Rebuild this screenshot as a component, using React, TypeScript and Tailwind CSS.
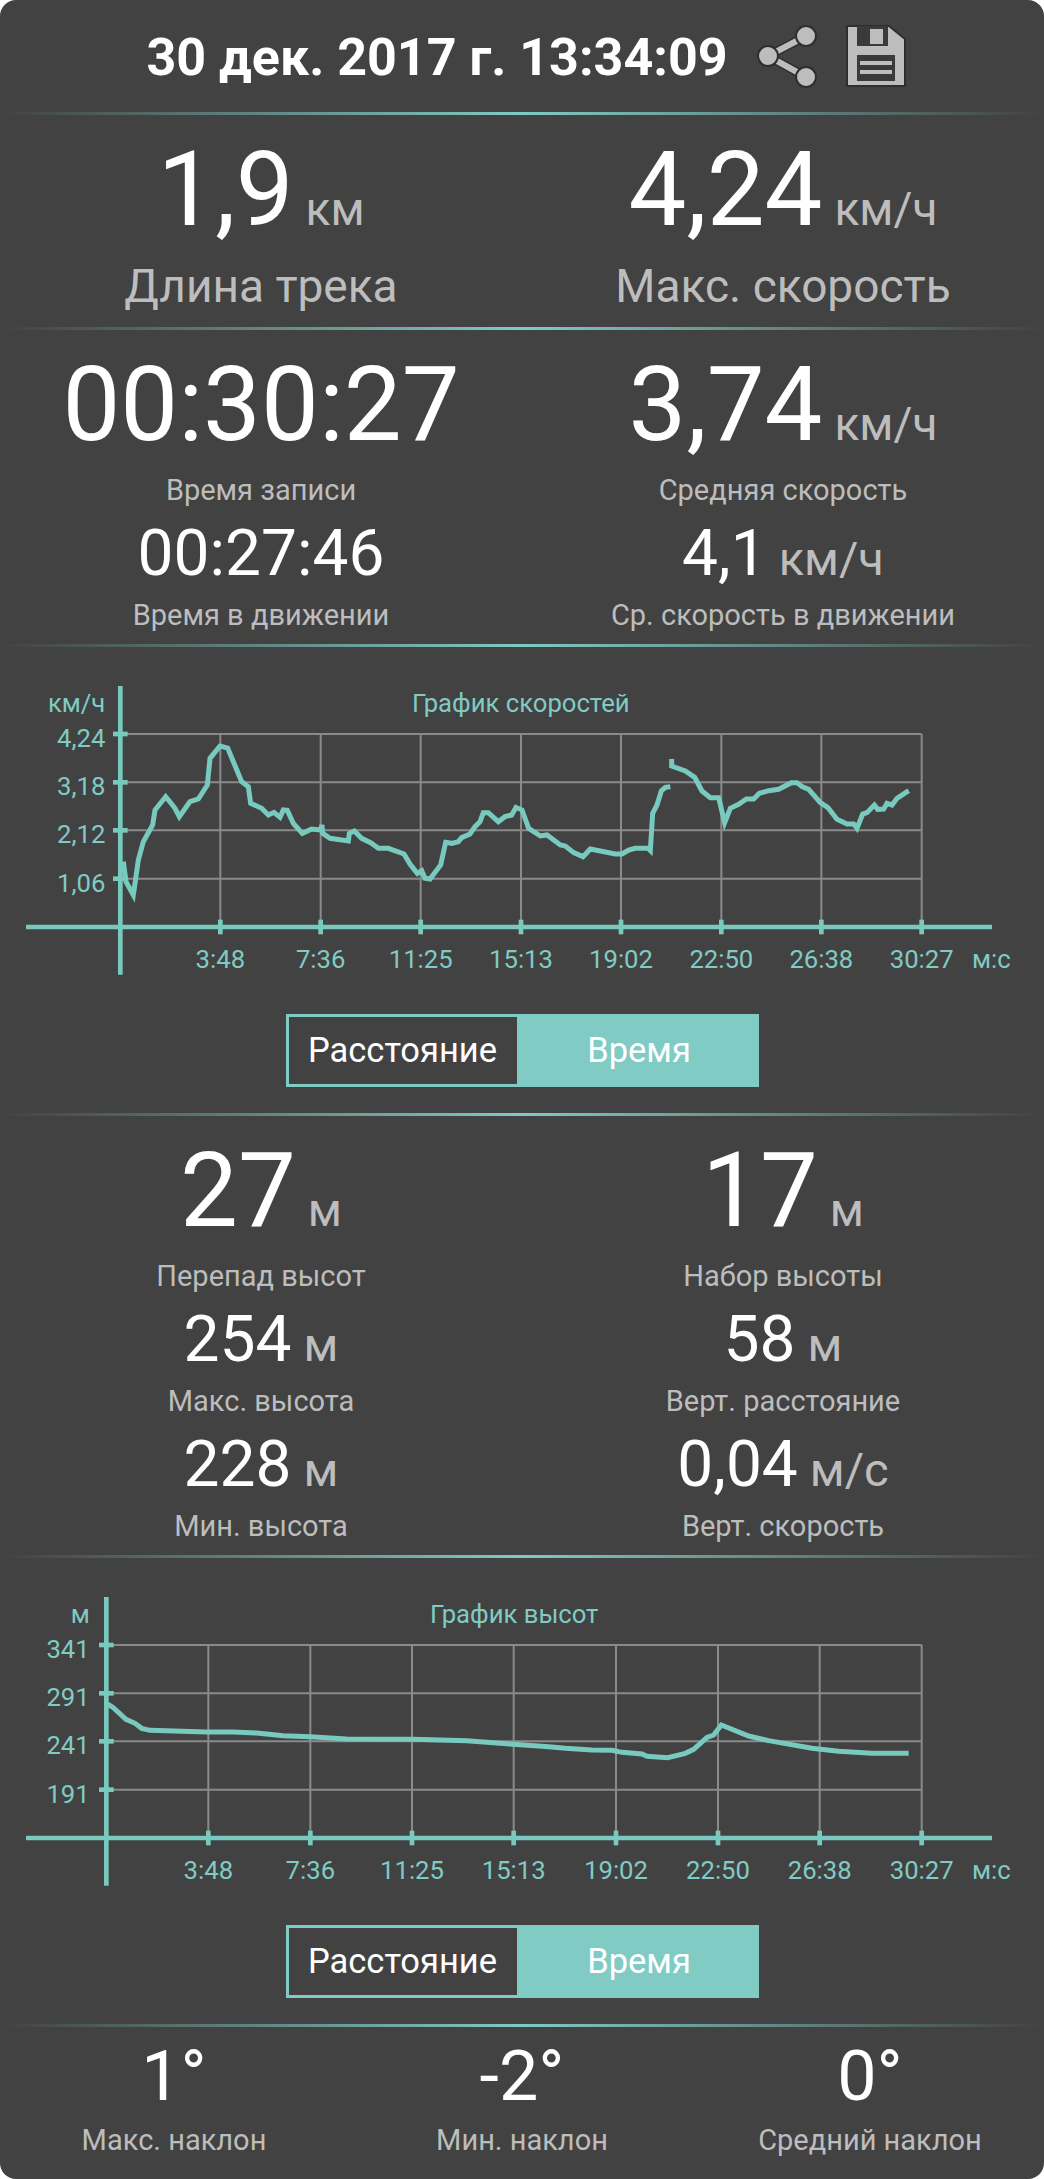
const ACCENT = '#78cabf';
const TEXT_ACCENT = '#80cbc4';

const speedLeft = [
  [370, 605], [378, 665], [400, 705], [415, 600], [430, 545], [458, 495], [465, 450], [497, 410], [515, 432], [525, 445],
  [538, 470], [570, 425], [595, 417], [622, 375], [630, 295], [660, 258], [683, 264], [725, 365], [745, 380], [752, 430],
  [785, 445], [805, 465], [822, 457], [840, 472], [850, 450], [862, 451], [880, 490], [907, 520], [935, 507], [962, 510],
  [966, 495], [968, 520], [990, 535], [1045, 543], [1048, 520], [1063, 513], [1085, 535], [1112, 548], [1135, 565], [1165, 565],
  [1212, 582], [1230, 612], [1252, 640], [1265, 632], [1275, 655], [1290, 657], [1322, 615], [1337, 547], [1355, 550], [1375, 545],
  [1385, 533], [1410, 522], [1425, 500], [1440, 485], [1450, 458], [1465, 458], [1495, 485], [1515, 470], [1535, 465], [1548, 442],
  [1566, 450],
];
const speedMid = [
  [20, 505], [55, 528], [75, 525], [115, 555], [130, 558], [155, 578], [183, 590], [205, 567], [280, 582], [300, 582],
  [320, 570], [340, 565], [378, 565], [385, 572], [392, 460], [405, 435], [418, 393], [430, 382], [445, 380],
];
const speedRight = [
  [449, 297], [449, 318], [490, 333], [518, 352], [540, 393], [565, 413], [590, 413], [608, 488], [625, 445], [650, 433],
  [673, 417], [695, 417], [712, 400], [740, 392], [770, 388], [808, 368], [825, 368], [840, 380], [860, 388], [895, 428],
  [918, 443], [945, 478], [975, 492], [995, 492], [1005, 505], [1022, 462], [1035, 458], [1057, 435], [1067, 448], [1085, 447],
  [1095, 430], [1110, 435], [1125, 415], [1160, 392],
];
const heightLeft = [
  [322, 372], [340, 383], [378, 418], [405, 430], [425, 445], [450, 451], [620, 456], [700, 456], [770, 459], [850, 467],
  [930, 470], [1040, 477], [1240, 478], [1400, 482], [1540, 493],
];
const heightRight = [
  [80, 500], [130, 505], [210, 510], [270, 511], [300, 517], [360, 522], [375, 529], [437, 533], [490, 520], [515, 508],
  [555, 472], [575, 465], [598, 435], [680, 468], [740, 482], [870, 505], [950, 514], [1050, 520], [1160, 520],
];

// right half of the crops starts at 1566 in chart units (3x)
const shift = (pts: number[][]) => pts.map(([x, y]) => [x + 1566, y]);
const toPath = (pts: number[][]) => pts.map(([x, y]) => `${x},${y}`).join(' ');

const X_LABELS = ['3:48', '7:36', '11:25', '15:13', '19:02', '22:50', '26:38', '30:27'];

type ChartProps = {
  title: string;
  unit: string;
  originX: number;
  labelGap: number;
  gridX: number[];
  gridY: number[];
  baseY: number;
  topY: number;
  bottomY: number;
  yLabels: string[];
  titleX: number;
  titleY: number;
  lines: number[][][];
};

function Chart({ title, unit, originX, labelGap, gridX, gridY, baseY, topY, bottomY, yLabels, titleX, titleY, lines }: ChartProps) {
  const right = 2765;
  return (
    <svg viewBox="0 0 3132 990" className="block w-[1044px] h-[330px]">
      {gridY.map((y) => (
        <line key={y} x1={originX} x2={right} y1={y} y2={y} stroke="#8a8a8a" strokeWidth={6} />
      ))}
      {gridX.map((x) => (
        <line key={x} x1={x} x2={x} y1={gridY[0]} y2={baseY} stroke="#8a8a8a" strokeWidth={6} />
      ))}
      <line x1={78} x2={2976} y1={baseY} y2={baseY} stroke={ACCENT} strokeWidth={14} />
      <line x1={originX} x2={originX} y1={topY} y2={bottomY} stroke={ACCENT} strokeWidth={14} />
      {gridY.map((y) => (
        <line key={y} x1={originX - 22} x2={originX + 22} y1={y} y2={y} stroke={ACCENT} strokeWidth={14} />
      ))}
      {gridX.map((x) => (
        <line key={x} x1={x} x2={x} y1={baseY - 22} y2={baseY + 22} stroke={ACCENT} strokeWidth={14} />
      ))}
      {lines.map((pts, i) => (
        <polyline key={i} points={toPath(pts)} fill="none" stroke={ACCENT} strokeWidth={15} strokeLinejoin="miter" />
      ))}
      <g fill={TEXT_ACCENT} fontSize={77} fontFamily="Roboto, sans-serif">
        <text x={originX - labelGap} y={titleY} textAnchor="end">{unit}</text>
        <text x={titleX} y={titleY}>{title}</text>
        {yLabels.map((label, i) => (
          <text key={label} x={originX - labelGap} y={gridY[i] + 39} textAnchor="end">{label}</text>
        ))}
        {X_LABELS.map((label, i) => (
          <text key={label} x={gridX[i]} y={baseY + 122} textAnchor="middle">{label}</text>
        ))}
        <text x={2916} y={baseY + 122}>м:с</text>
      </g>
    </svg>
  );
}

function Divider() {
  return <div className="h-[3px] bg-[linear-gradient(to_right,#42424200,#80cbc4_50%,#42424200)]" />;
}

function Big({ value, unit, size, unitSize }: { value: string; unit?: string; size: string; unitSize: string }) {
  return (
    <div className="text-center whitespace-nowrap leading-none">
      <span className={`text-white ${size}`}>{value}</span>
      {unit && <span className={`text-[#bdbdbd] ml-3 ${unitSize}`}>{unit}</span>}
    </div>
  );
}

function Toggle() {
  return (
    <div className="flex justify-center">
      <div className="flex w-[473px] h-[73px] text-[34.5px] text-white">
        <div className="w-[234px] border-[3px] border-[#80cbc4] flex items-center justify-center">Расстояние</div>
        <div className="flex-1 bg-[#80cbc4] flex items-center justify-center">Время</div>
      </div>
    </div>
  );
}

function Stat({ value, unit, label, size, unitSize, h }: { value: string; unit?: string; label: string; size: string; unitSize: string; h: string }) {
  return (
    <div className="flex flex-col items-center">
      <div className={`${h} flex items-center`}>
        <Big value={value} unit={unit} size={size} unitSize={unitSize} />
      </div>
      <div className="text-[29px] leading-[36px] text-[#bdbdbd] whitespace-nowrap">{label}</div>
    </div>
  );
}

function ShareIcon() {
  return (
    <svg width="60" height="63" viewBox="0 0 60 63">
      <path d="M11 31 L49 11 M11 31 L49 52" stroke="#2e2e2e" strokeWidth="9" fill="none" />
      <path d="M11 31 L49 11 M11 31 L49 52" stroke="#bdbdbd" strokeWidth="6" fill="none" />
      <g fill="#bdbdbd" stroke="#2e2e2e" strokeWidth="2">
        <circle cx="49" cy="11" r="10" />
        <circle cx="49" cy="52" r="10" />
        <circle cx="11" cy="31" r="10" />
      </g>
    </svg>
  );
}

function SaveIcon() {
  return (
    <svg width="60" height="62" viewBox="0 0 60 62">
      <path d="M1 1 H43 L59 14 V61 H1 Z" fill="#bdbdbd" stroke="#2e2e2e" strokeWidth="2" />
      <rect x="11" y="1" width="31" height="20" fill="#3a3a3a" />
      <rect x="24" y="4" width="13" height="15" fill="#bdbdbd" />
      <rect x="11" y="30" width="38" height="26" fill="#3a3a3a" />
      <rect x="14" y="36" width="32" height="4" fill="#bdbdbd" />
      <rect x="14" y="45" width="32" height="4" fill="#bdbdbd" />
    </svg>
  );
}

export default function App() {
  const hugeSize = 'text-[103px]';
  const hugeUnit = 'text-[46px]';
  const midSize = 'text-[64px]';
  const midUnit = 'text-[47px]';
  const midRow = 'h-[89px] pt-[3px]';
  return (
    <div className="w-[1044px] h-[2179px] overflow-hidden bg-[#424242] rounded-[16px] font-['Roboto',sans-serif]">
      <div className="h-[112px] pl-2 flex items-center justify-center gap-[29px]">
        <span className="pt-[3px] text-[52px] font-bold text-white whitespace-nowrap">30 дек. 2017 г. 13:34:09</span>
        <div className="flex items-center gap-[29px]">
          <ShareIcon />
          <SaveIcon />
        </div>
      </div>
      <Divider />
      <div className="grid grid-cols-2 h-[212px]">
        {[
          ['1,9', 'км', 'Длина трека'],
          ['4,24', 'км/ч', 'Макс. скорость'],
        ].map(([value, unit, label]) => (
          <div key={label} className="flex flex-col items-center pt-[5px]">
            <div className="h-[138px] flex items-center">
              <Big value={value} unit={unit} size={hugeSize} unitSize={hugeUnit} />
            </div>
            <div className="text-[46px] leading-[56px] text-[#bdbdbd] whitespace-nowrap">{label}</div>
          </div>
        ))}
      </div>
      <Divider />
      <div className="grid grid-cols-2 h-[314px] pt-[6px]">
        <div>
          <Stat value="00:30:27" label="Время записи" size={hugeSize} unitSize={hugeUnit} h="h-[136px]" />
          <Stat value="00:27:46" label="Время в движении" size={midSize} unitSize={midUnit} h={midRow} />
        </div>
        <div>
          <Stat value="3,74" unit="км/ч" label="Средняя скорость" size={hugeSize} unitSize={hugeUnit} h="h-[136px]" />
          <Stat value="4,1" unit="км/ч" label="Ср. скорость в движении" size={midSize} unitSize={midUnit} h={midRow} />
        </div>
      </div>
      <Divider />
      <div className="h-[354px] mt-[13px]">
        <Chart
          title="График скоростей"
          unit="км/ч"
          originX={361}
          labelGap={45}
          gridX={[661, 962, 1262, 1563, 1863, 2164, 2464, 2765]}
          gridY={[222, 367, 511, 656]}
          baseY={801}
          topY={78}
          bottomY={944}
          yLabels={['4,24', '3,18', '2,12', '1,06']}
          titleX={1236}
          titleY={157}
          lines={[[...speedLeft, ...shift(speedMid)], shift(speedRight)]}
        />
      </div>
      <Toggle />
      <div className="h-[26px]" />
      <Divider />
      <div className="grid grid-cols-2 h-[439px] pt-[7px]">
        <div>
          <Stat value="27" unit="м" label="Перепад высот" size={hugeSize} unitSize={hugeUnit} h="h-[135px]" />
          <Stat value="254" unit="м" label="Макс. высота" size={midSize} unitSize={midUnit} h={midRow} />
          <Stat value="228" unit="м" label="Мин. высота" size={midSize} unitSize={midUnit} h={midRow} />
        </div>
        <div>
          <Stat value="17" unit="м" label="Набор высоты" size={hugeSize} unitSize={hugeUnit} h="h-[135px]" />
          <Stat value="58" unit="м" label="Верт. расстояние" size={midSize} unitSize={midUnit} h={midRow} />
          <Stat value="0,04" unit="м/с" label="Верт. скорость" size={midSize} unitSize={midUnit} h={midRow} />
        </div>
      </div>
      <Divider />
      <div className="h-[345px] mt-[22px]">
        <Chart
          title="График высот"
          unit="м"
          originX={319}
          labelGap={50}
          gridX={[625, 931, 1236, 1541, 1848, 2154, 2459, 2765]}
          gridY={[195, 340, 484, 629]}
          baseY={774}
          topY={51}
          bottomY={917}
          yLabels={['341', '291', '241', '191']}
          titleX={1290}
          titleY={130}
          lines={[[...heightLeft, ...shift(heightRight)]]}
        />
      </div>
      <Toggle />
      <div className="h-[26px]" />
      <Divider />
      <div className="grid grid-cols-3 pt-[3px]">
        {[
          ['1°', 'Макс. наклон'],
          ['-2°', 'Мин. наклон'],
          ['0°', 'Средний наклон'],
        ].map(([value, label]) => (
          <Stat key={label} value={value} label={label} size="text-[70px]" unitSize={midUnit} h="h-[92px]" />
        ))}
      </div>
    </div>
  );
}
